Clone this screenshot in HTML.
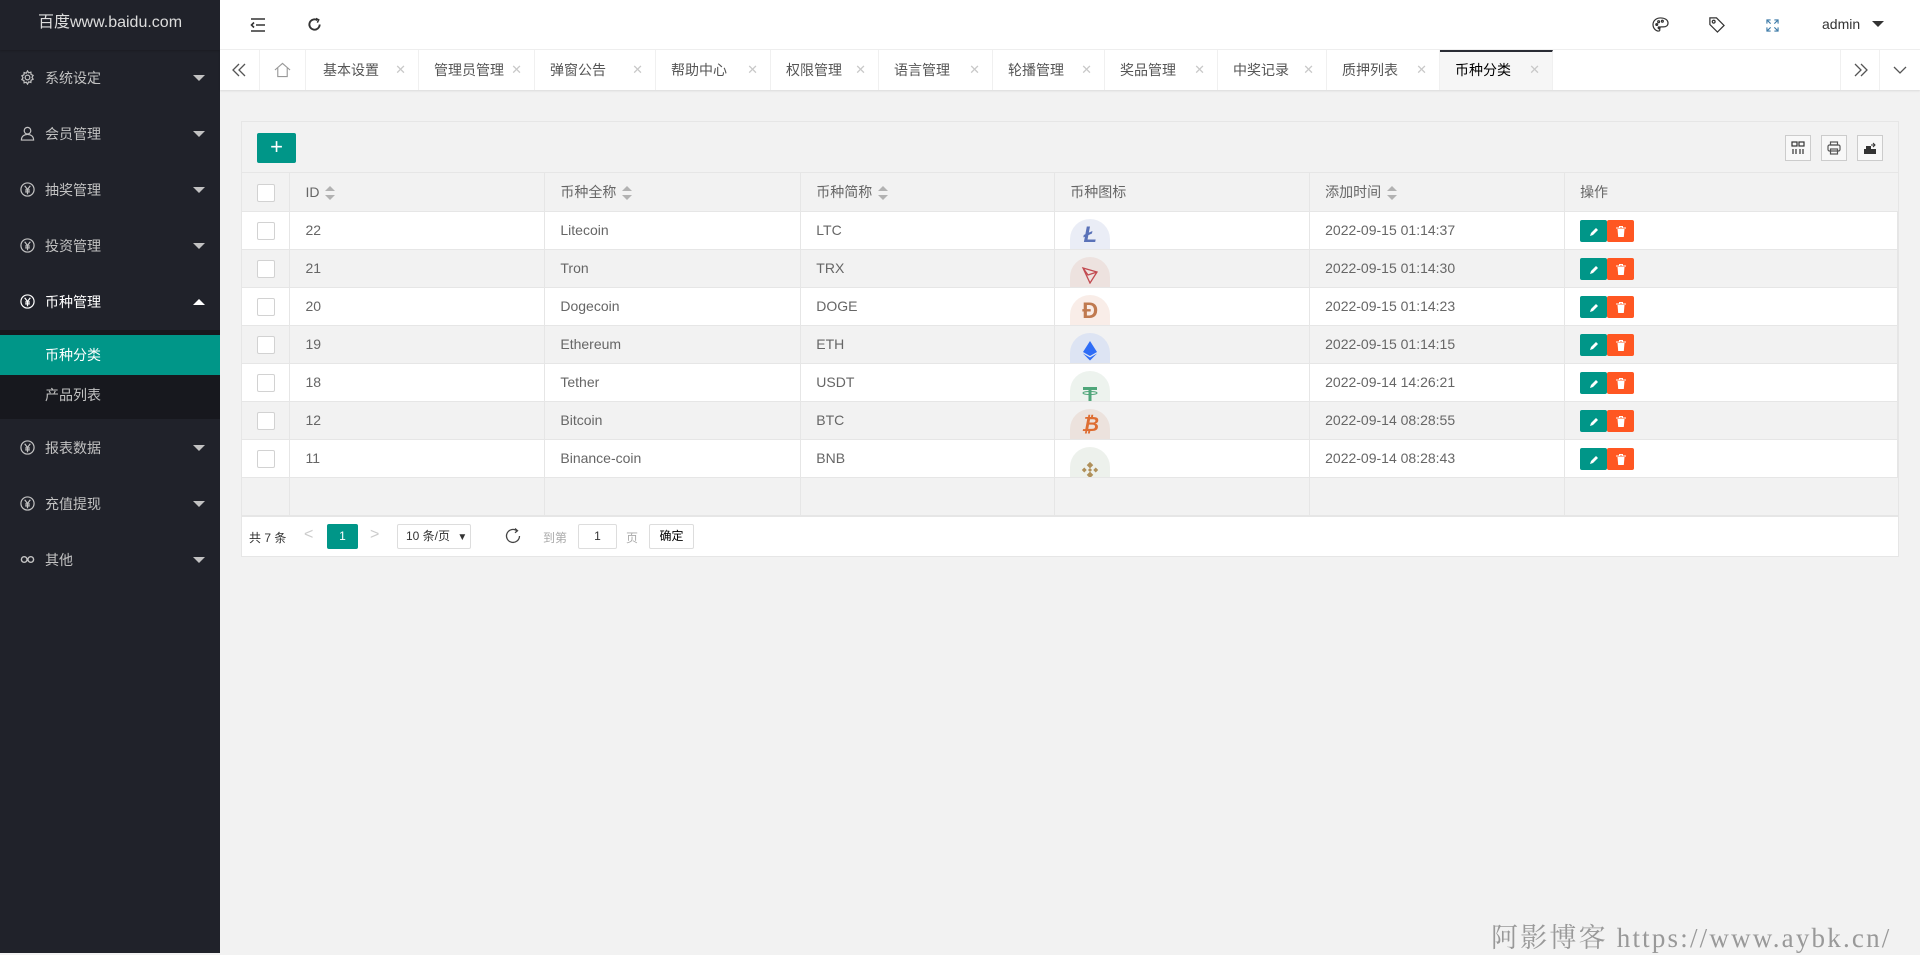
<!DOCTYPE html>
<html><head><meta charset="utf-8"><style>
*{box-sizing:border-box;margin:0;padding:0}
body{width:1920px;height:953px;overflow:hidden;background:#f2f2f2;font-family:"Liberation Sans","Noto Sans CJK SC",sans-serif;font-size:13px;color:#666;position:relative}
.side{position:absolute;left:0;top:0;width:220px;height:953px;background:#20222a}
.logo{height:50px;line-height:46px;text-align:center;color:#ddd;font-size:16px;box-shadow:0 1px 2px rgba(0,0,0,.2)}
.mi{position:absolute;left:0;width:220px;height:56px;line-height:56px;color:#c2c2c2;font-size:14px}
.mi .t{position:absolute;left:45px}
.mi .ic{position:absolute;left:20px;top:20px}
.mi .ar{position:absolute;left:193px;top:25px;width:0;height:0;border-left:6px solid transparent;border-right:6px solid transparent;border-top:6px solid #c2c2c2}
.mi .ar.up{border-top:none;border-bottom:6px solid #fff}
.sub{position:absolute;left:0;top:330px;width:220px;height:89px;background:#17181e}
.head{position:absolute;left:220px;top:0;right:0;height:50px;background:#fff;border-bottom:1px solid #f0f0f0}
.tabs{position:absolute;left:220px;top:50px;right:0;height:40px;background:#fff;box-shadow:0 1px 2px rgba(0,0,0,.1)}
.tab{position:absolute;top:0;height:40px;line-height:40px;border-right:1px solid #f0f0f0;color:#555;font-size:14px}
.tab .x{position:absolute;right:12px;top:0;color:#c8c8c8;font-size:13px}
.card{position:absolute;left:241px;top:121px;width:1658px;height:436px;background:#fff;border:1px solid #e6e6e6}
.tb{height:51px;background:#f2f2f2;border-bottom:1px solid #e6e6e6;position:relative}
.add{position:absolute;left:15px;top:11px;width:39px;height:30px;background:#009688;color:#fff;border-radius:2px;text-align:center;line-height:28px;font-size:22px}
.tool{position:absolute;top:13px;width:26px;height:26px;border:1px solid #ccc;background:#f8f8f8}
table{border-collapse:collapse;position:absolute;left:0;top:51px;table-layout:fixed}
td,th{height:38px;border-right:1px solid #e6e6e6;border-bottom:1px solid #e6e6e6;text-align:left;font-weight:normal;padding:0 0 0 15px;color:#666;font-size:14px;white-space:nowrap;overflow:hidden;vertical-align:middle}
td div.wrap{height:37px;line-height:37px;overflow:hidden}
tr.g td,th{background:#f2f2f2}
th div.wrap{height:38px;line-height:38px}
.cb{display:inline-block;width:18px;height:18px;border:1px solid #d2d2d2;background:#fff;border-radius:2px;vertical-align:middle}
.sort{display:inline-block;vertical-align:middle;margin-left:6px;width:10px;height:14px;position:relative}
.sort:before{content:"";position:absolute;top:0;left:0;border:5px solid transparent;border-bottom:5px solid #b2b2b2;border-top:none}
.sort:after{content:"";position:absolute;bottom:0;left:0;border:5px solid transparent;border-top:5px solid #b2b2b2;border-bottom:none}
.coin{width:40px;height:30px;border-radius:20px 20px 0 0;margin-top:7px;overflow:hidden;display:flex;justify-content:center;align-items:flex-end;font-weight:bold;font-size:22px;line-height:28px}
.bt{display:inline-block;width:27px;height:22px;vertical-align:middle;border-radius:2px;text-align:center;line-height:22px}
.bt svg{vertical-align:middle;margin-top:-2px}
.pg{position:absolute;left:0;bottom:0;width:100%;height:40px;border-top:1px solid #e6e6e6;font-size:12px;color:#333;background:#fff}
.pg span{position:absolute}
</style></head><body>
<div class="side">
<div class="logo">百度www.baidu.com</div>
<div class="mi" style="top:50px"><svg class="ic" width="15" height="15" viewBox="0 0 16 16" fill="none" stroke="#c2c2c2" stroke-width="1.3"><circle cx="8" cy="8" r="2.5"/><path d="M8 1l1.3 2 2.3-.7.2 2.4 2.2 1-1.2 2.1 1.2 2.1-2.2 1-.2 2.4-2.3-.7L8 15l-1.3-2-2.3.7-.2-2.4-2.2-1 1.2-2.1-1.2-2.1 2.2-1 .2-2.4 2.3.7z"/></svg><span class="t">系统设定</span><i class="ar"></i></div>
<div class="mi" style="top:106px"><svg class="ic" width="15" height="15" viewBox="0 0 16 16" fill="none" stroke="#c2c2c2" stroke-width="1.3"><circle cx="8" cy="5" r="3.5"/><path d="M1.5 15c0-4 3-6 6.5-6s6.5 2 6.5 6z"/></svg><span class="t">会员管理</span><i class="ar"></i></div>
<div class="mi" style="top:162px"><svg class="ic" width="15" height="15" viewBox="0 0 16 16" fill="none" stroke="#c2c2c2" stroke-width="1.3"><circle cx="8" cy="8" r="7"/><path d="M5 4l3 4 3-4M8 8v5M5.5 8.5h5M5.5 10.5h5"/></svg><span class="t">抽奖管理</span><i class="ar"></i></div>
<div class="mi" style="top:218px"><svg class="ic" width="15" height="15" viewBox="0 0 16 16" fill="none" stroke="#c2c2c2" stroke-width="1.3"><circle cx="8" cy="8" r="7"/><path d="M5 4l3 4 3-4M8 8v5M5.5 8.5h5M5.5 10.5h5"/></svg><span class="t">投资管理</span><i class="ar"></i></div>
<div class="mi" style="top:274px;color:#fff"><svg class="ic" width="15" height="15" viewBox="0 0 16 16" fill="none" stroke="#fff" stroke-width="1.3"><circle cx="8" cy="8" r="7"/><path d="M5 4l3 4 3-4M8 8v5M5.5 8.5h5M5.5 10.5h5"/></svg><span class="t">币种管理</span><i class="ar up"></i></div>
<div class="sub"></div>
<div style="position:absolute;left:0;top:335px;width:220px;height:40px;background:#009688;color:#fff;line-height:40px;padding-left:45px;font-size:14px">币种分类</div>
<div style="position:absolute;left:0;top:375px;width:220px;height:40px;color:#c2c2c2;line-height:40px;padding-left:45px;font-size:14px">产品列表</div>
<div class="mi" style="top:420px"><svg class="ic" width="15" height="15" viewBox="0 0 16 16" fill="none" stroke="#c2c2c2" stroke-width="1.3"><circle cx="8" cy="8" r="7"/><path d="M5 4l3 4 3-4M8 8v5M5.5 8.5h5M5.5 10.5h5"/></svg><span class="t">报表数据</span><i class="ar"></i></div>
<div class="mi" style="top:476px"><svg class="ic" width="15" height="15" viewBox="0 0 16 16" fill="none" stroke="#c2c2c2" stroke-width="1.3"><circle cx="8" cy="8" r="7"/><path d="M5 4l3 4 3-4M8 8v5M5.5 8.5h5M5.5 10.5h5"/></svg><span class="t">充值提现</span><i class="ar"></i></div>
<div class="mi" style="top:532px"><svg class="ic" width="15" height="15" viewBox="0 0 16 16" fill="none" stroke="#c2c2c2" stroke-width="1.5"><circle cx="4.5" cy="8" r="3"/><circle cx="11.5" cy="8" r="3"/></svg><span class="t">其他</span><i class="ar"></i></div>
</div>

<div class="head">
<svg style="position:absolute;left:30px;top:18px" width="16" height="14" viewBox="0 0 16 14" fill="none" stroke="#333" stroke-width="1.6"><path d="M1 1h14M6 7h9M1 13h14M4 4.5L1.5 7 4 9.5"/></svg>
<svg style="position:absolute;left:87px;top:17px" width="15" height="15" viewBox="0 0 16 16" fill="none" stroke="#333" stroke-width="2"><path d="M13.5 8A5.5 5.5 0 1 1 11 3.4"/><path d="M9.5 1.5L12.5 3 11 6" stroke-width="1.6"/></svg>
<svg style="position:absolute;left:1432px;top:17px" width="17" height="15" viewBox="0 0 18 16" fill="none" stroke="#333" stroke-width="1.3"><path d="M9 1C4.5 1 1 4 1 8s3 7 6 7c1.5 0 1.5-1.5 1-2.5s0-2 1.5-2H12c3 0 5-1.5 5-4C17 3 13.5 1 9 1z"/><circle cx="5" cy="8" r="1" fill="#333"/><circle cx="7" cy="5" r="1"/><circle cx="11" cy="4.5" r="1"/><circle cx="7.5" cy="11.5" r="1" fill="#333"/></svg>
<svg style="position:absolute;left:1488px;top:16px" width="17" height="17" viewBox="0 0 18 18" fill="none" stroke="#333" stroke-width="1.3"><path d="M2 2h7l8 8-7 7-8-8z"/><circle cx="6" cy="6" r="1.5"/></svg>
<svg style="position:absolute;left:1546px;top:19px" width="13" height="13" viewBox="0 0 14 14" fill="none" stroke="#3d7ba8" stroke-width="1.2"><path d="M1 5V1h4M1 1l4 4M13 5V1H9M13 1L9 5M1 9v4h4M1 13l4-4M13 9v4H9M13 13L9 9"/></svg>
<span style="position:absolute;left:1602px;top:16px;color:#333;font-size:14px">admin</span>
<i style="position:absolute;left:1652px;top:21px;border-left:6px solid transparent;border-right:6px solid transparent;border-top:6px solid #333"></i>
</div>

<div class="tabs">
<div class="tab" style="left:0;width:40px"><svg style="position:absolute;left:12px;top:13px" width="14" height="14" viewBox="0 0 14 14" fill="none" stroke="#555" stroke-width="1.3"><path d="M7 1L1 7l6 6M13 1L7 7l6 6"/></svg></div>
<div class="tab" style="left:40px;width:46px"><svg style="position:absolute;left:14px;top:12px" width="17" height="16" viewBox="0 0 18 16" fill="none" stroke="#999" stroke-width="1.2"><path d="M1 8L9 1l8 7M4 6v9h10V6"/></svg></div>
<div class="tab" style="left:86px;width:113px;padding-left:17px">基本设置<span class="x">✕</span></div>
<div class="tab" style="left:199px;width:116px;padding-left:15px">管理员管理<span class="x">✕</span></div>
<div class="tab" style="left:315px;width:121px;padding-left:15px">弹窗公告<span class="x">✕</span></div>
<div class="tab" style="left:436px;width:115px;padding-left:15px">帮助中心<span class="x">✕</span></div>
<div class="tab" style="left:551px;width:108px;padding-left:15px">权限管理<span class="x">✕</span></div>
<div class="tab" style="left:659px;width:114px;padding-left:15px">语言管理<span class="x">✕</span></div>
<div class="tab" style="left:773px;width:112px;padding-left:15px">轮播管理<span class="x">✕</span></div>
<div class="tab" style="left:885px;width:113px;padding-left:15px">奖品管理<span class="x">✕</span></div>
<div class="tab" style="left:998px;width:109px;padding-left:15px">中奖记录<span class="x">✕</span></div>
<div class="tab" style="left:1107px;width:113px;padding-left:15px">质押列表<span class="x">✕</span></div>
<div class="tab" style="left:1220px;width:113px;padding-left:15px;background:#f6f6f6;color:#000;border-top:2px solid #292b34;line-height:36px">币种分类<span class="x">✕</span></div>
<div class="tab" style="left:1620px;width:40px;border-left:1px solid #f0f0f0"><svg style="position:absolute;left:13px;top:13px" width="14" height="14" viewBox="0 0 14 14" fill="none" stroke="#555" stroke-width="1.3"><path d="M1 1l6 6-6 6M7 1l6 6-6 6"/></svg></div>
<div class="tab" style="left:1660px;width:40px;border-right:none"><svg style="position:absolute;left:13px;top:16px" width="14" height="8" viewBox="0 0 14 8" fill="none" stroke="#555" stroke-width="1.3"><path d="M1 1l6 6 6-6"/></svg></div>
</div>

<div class="card">
<div class="tb">
<div class="add">+</div>
<div class="tool" style="left:1543px"><svg style="margin:5px" width="14" height="14" viewBox="0 0 14 14" fill="none" stroke="#333" stroke-width="1.2"><rect x="1" y="1" width="5" height="4"/><rect x="8" y="1" width="5" height="4"/><path d="M2 8v5M5 8v5M9 8v5M12 8v5"/></svg></div>
<div class="tool" style="left:1579px"><svg style="margin:5px" width="14" height="14" viewBox="0 0 14 14" fill="none" stroke="#555" stroke-width="1.2"><rect x="3.5" y="1" width="7" height="3"/><rect x="1" y="4" width="12" height="6" rx="1.5"/><rect x="3.5" y="8" width="7" height="5"/></svg></div>
<div class="tool" style="left:1615px"><svg style="margin:5px" width="14" height="14" viewBox="0 0 14 14"><rect x="1" y="8" width="12" height="5" fill="#333"/><rect x="3" y="5" width="5" height="4" fill="#333"/><path d="M8 4h4M10 2l2 2-2 2" stroke="#333" fill="none"/></svg></div>
</div>
<table>
<colgroup><col style="width:48px"><col style="width:255px"><col style="width:256px"><col style="width:254px"><col style="width:255px"><col style="width:255px"><col style="width:333px"></colgroup>
<tr><th><div class="wrap"><span class="cb"></span></div></th><th><div class="wrap">ID<i class="sort"></i></div></th><th><div class="wrap">币种全称<i class="sort"></i></div></th><th><div class="wrap">币种简称<i class="sort"></i></div></th><th><div class="wrap">币种图标</div></th><th><div class="wrap">添加时间<i class="sort"></i></div></th><th style="border-right:none"><div class="wrap">操作</div></th></tr>
<tr><td><div class="wrap"><span class="cb"></span></div></td><td><div class="wrap">22</div></td><td><div class="wrap">Litecoin</div></td><td><div class="wrap">LTC</div></td><td><div class="wrap"><div class="coin" style="background:#eaedf6;color:#5a72b8;font-style:italic">Ł</div></div></td><td><div class="wrap">2022-09-15 01:14:37</div></td><td><div class="wrap"><span class="bt" style="background:#009688"><svg width="10" height="10" viewBox="0 0 10 10"><path d="M1 9l1-3 5-5 2 2-5 5z" fill="#fff"/></svg></span><span class="bt" style="background:#ff5722"><svg width="10" height="11" viewBox="0 0 10 11"><path d="M0 2h10M3.5 2V.5h3V2" stroke="#fff" fill="none"/><path d="M1.5 3h7l-.7 8H2.2z" fill="#fff"/></svg></span></div></td></tr>
<tr class="g"><td><div class="wrap"><span class="cb"></span></div></td><td><div class="wrap">21</div></td><td><div class="wrap">Tron</div></td><td><div class="wrap">TRX</div></td><td><div class="wrap"><div class="coin" style="background:#ede2df"><svg width="18" height="18" viewBox="0 0 18 18" fill="none" stroke="#c24a50" stroke-width="1.3" style="margin-bottom:3px"><path d="M2 2l14 4-7 11z M2 2l7 15M16 6L7 9 2 2"/></svg></div></div></td><td><div class="wrap">2022-09-15 01:14:30</div></td><td><div class="wrap"><span class="bt" style="background:#009688"><svg width="10" height="10" viewBox="0 0 10 10"><path d="M1 9l1-3 5-5 2 2-5 5z" fill="#fff"/></svg></span><span class="bt" style="background:#ff5722"><svg width="10" height="11" viewBox="0 0 10 11"><path d="M0 2h10M3.5 2V.5h3V2" stroke="#fff" fill="none"/><path d="M1.5 3h7l-.7 8H2.2z" fill="#fff"/></svg></span></div></td></tr>
<tr><td><div class="wrap"><span class="cb"></span></div></td><td><div class="wrap">20</div></td><td><div class="wrap">Dogecoin</div></td><td><div class="wrap">DOGE</div></td><td><div class="wrap"><div class="coin" style="background:#f9ede8;color:#c07a50">Đ</div></div></td><td><div class="wrap">2022-09-15 01:14:23</div></td><td><div class="wrap"><span class="bt" style="background:#009688"><svg width="10" height="10" viewBox="0 0 10 10"><path d="M1 9l1-3 5-5 2 2-5 5z" fill="#fff"/></svg></span><span class="bt" style="background:#ff5722"><svg width="10" height="11" viewBox="0 0 10 11"><path d="M0 2h10M3.5 2V.5h3V2" stroke="#fff" fill="none"/><path d="M1.5 3h7l-.7 8H2.2z" fill="#fff"/></svg></span></div></td></tr>
<tr class="g"><td><div class="wrap"><span class="cb"></span></div></td><td><div class="wrap">19</div></td><td><div class="wrap">Ethereum</div></td><td><div class="wrap">ETH</div></td><td><div class="wrap"><div class="coin" style="background:#dde4f3"><svg width="14" height="20" viewBox="0 0 14 20" style="margin-bottom:2px"><path d="M7 0L0 11l7 4 7-4z" fill="#2f6df6"/><path d="M0 12.5l7 7 7-7-7 4z" fill="#2f6df6"/></svg></div></div></td><td><div class="wrap">2022-09-15 01:14:15</div></td><td><div class="wrap"><span class="bt" style="background:#009688"><svg width="10" height="10" viewBox="0 0 10 10"><path d="M1 9l1-3 5-5 2 2-5 5z" fill="#fff"/></svg></span><span class="bt" style="background:#ff5722"><svg width="10" height="11" viewBox="0 0 10 11"><path d="M0 2h10M3.5 2V.5h3V2" stroke="#fff" fill="none"/><path d="M1.5 3h7l-.7 8H2.2z" fill="#fff"/></svg></span></div></td></tr>
<tr><td><div class="wrap"><span class="cb"></span></div></td><td><div class="wrap">18</div></td><td><div class="wrap">Tether</div></td><td><div class="wrap">USDT</div></td><td><div class="wrap"><div class="coin" style="background:#edf3ee"><svg width="18" height="16" viewBox="0 0 18 16"><path d="M2 2h14v3H10.5v11h-3V5H2z" fill="#4fa67a"/><ellipse cx="9" cy="8" rx="7" ry="1.5" fill="none" stroke="#4fa67a"/></svg></div></div></td><td><div class="wrap">2022-09-14 14:26:21</div></td><td><div class="wrap"><span class="bt" style="background:#009688"><svg width="10" height="10" viewBox="0 0 10 10"><path d="M1 9l1-3 5-5 2 2-5 5z" fill="#fff"/></svg></span><span class="bt" style="background:#ff5722"><svg width="10" height="11" viewBox="0 0 10 11"><path d="M0 2h10M3.5 2V.5h3V2" stroke="#fff" fill="none"/><path d="M1.5 3h7l-.7 8H2.2z" fill="#fff"/></svg></span></div></td></tr>
<tr class="g"><td><div class="wrap"><span class="cb"></span></div></td><td><div class="wrap">12</div></td><td><div class="wrap">Bitcoin</div></td><td><div class="wrap">BTC</div></td><td><div class="wrap"><div class="coin" style="background:#ece2dd;color:#de6d32;font-style:italic;font-size:20px">₿</div></div></td><td><div class="wrap">2022-09-14 08:28:55</div></td><td><div class="wrap"><span class="bt" style="background:#009688"><svg width="10" height="10" viewBox="0 0 10 10"><path d="M1 9l1-3 5-5 2 2-5 5z" fill="#fff"/></svg></span><span class="bt" style="background:#ff5722"><svg width="10" height="11" viewBox="0 0 10 11"><path d="M0 2h10M3.5 2V.5h3V2" stroke="#fff" fill="none"/><path d="M1.5 3h7l-.7 8H2.2z" fill="#fff"/></svg></span></div></td></tr>
<tr><td><div class="wrap"><span class="cb"></span></div></td><td><div class="wrap">11</div></td><td><div class="wrap">Binance-coin</div></td><td><div class="wrap">BNB</div></td><td><div class="wrap"><div class="coin" style="background:#edf1ec"><svg width="22" height="18" viewBox="0 0 22 22" style="margin-bottom:-2px"><path d="M11 1l4 4-4 4-4-4zM4 8l3 3-3 3-3-3zM18 8l3 3-3 3-3-3zM11 13l4 4-4 4-4-4zM11 8.5l2.5 2.5-2.5 2.5-2.5-2.5z" fill="#b0905a"/></svg></div></div></td><td><div class="wrap">2022-09-14 08:28:43</div></td><td><div class="wrap"><span class="bt" style="background:#009688"><svg width="10" height="10" viewBox="0 0 10 10"><path d="M1 9l1-3 5-5 2 2-5 5z" fill="#fff"/></svg></span><span class="bt" style="background:#ff5722"><svg width="10" height="11" viewBox="0 0 10 11"><path d="M0 2h10M3.5 2V.5h3V2" stroke="#fff" fill="none"/><path d="M1.5 3h7l-.7 8H2.2z" fill="#fff"/></svg></span></div></td></tr>
<tr class="g"><td><div class="wrap"></div></td><td></td><td></td><td></td><td></td><td></td><td style="border-right:none"></td></tr>
</table>
<div class="pg">
<span style="left:7px;top:12px">共 7 条</span>
<span style="left:62px;top:9px;color:#ccc;font-size:16px">&lt;</span>
<span style="left:85px;top:7px;width:31px;height:25px;background:#009688;color:#fff;text-align:center;line-height:25px;border-radius:2px">1</span>
<span style="left:128px;top:9px;color:#ccc;font-size:16px">&gt;</span>
<span style="left:155px;top:7px;width:74px;height:25px;border:1px solid #ddd;border-radius:2px;line-height:23px;padding-left:8px">10 条/页 <b style="font-size:10px;margin-left:4px">▼</b></span>
<svg style="position:absolute;left:262px;top:10px" width="18" height="18" viewBox="0 0 18 18" fill="none" stroke="#444" stroke-width="1.3"><path d="M15.5 9A6.5 6.5 0 1 1 13 3.8"/><path d="M11 1.5l2.5 2.2-2.5 2"/></svg>
<span style="left:301px;top:12px;color:#aaa">到第</span>
<span style="left:336px;top:7px;width:39px;height:25px;border:1px solid #ddd;border-radius:2px;text-align:center;line-height:23px">1</span>
<span style="left:384px;top:12px;color:#aaa">页</span>
<span style="left:407px;top:7px;width:45px;height:25px;border:1px solid #ddd;border-radius:2px;text-align:center;line-height:23px;color:#000">确定</span>
</div>
</div>
<div style="position:absolute;left:1491px;top:916px;font-family:'Liberation Serif','Noto Serif CJK SC',serif;font-size:27px;color:#999;letter-spacing:2.2px;white-space:nowrap">阿影博客 https://www.aybk.cn/</div>
</body></html>
